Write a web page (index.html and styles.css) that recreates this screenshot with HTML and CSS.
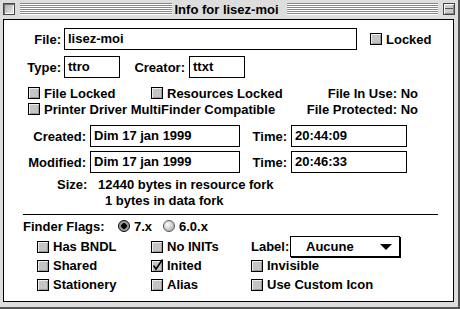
FILE: index.html
```html
<!DOCTYPE html>
<html lang="fr">
<head>
    <meta charset="UTF-8">
    <title>Info for lisez-moi</title>
    <link rel="stylesheet" href="styles.css">
</head>
<body>

<div class="window">
    <div class="titlebar">
        <span class="closebox"></span>
        <span class="stripes"></span>
        <span class="title">Info for lisez-moi</span>
        <span class="stripes"></span>
        <span class="shadebox"></span>
    </div>

    <div class="content">
        <!-- nom et verrou -->
        <div class="row row-file">
            <span class="lbl lbl-a">File:</span>
            <span class="field field-name">lisez-moi</span>
            <span class="check check-locked"><span class="box"></span>Locked</span>
        </div>

        <div class="row row-type">
            <span class="lbl lbl-a">Type:</span>
            <span class="field field-code">ttro</span>
            <span class="lbl lbl-creator">Creator:</span>
            <span class="field field-code">ttxt</span>
        </div>

        <!-- attributs -->
        <div class="attrs">
            <div class="attr-row">
                <span class="check col-first"><span class="box"></span>File Locked</span>
                <span class="check"><span class="box"></span>Resources Locked</span>
                <span class="status">File In Use: No</span>
            </div>
            <div class="attr-row">
                <span class="check"><span class="box"></span>Printer Driver MultiFinder Compatible</span>
                <span class="status">File Protected: No</span>
            </div>
        </div>

        <!-- dates -->
        <div class="row row-created">
            <span class="lbl lbl-b">Created:</span>
            <span class="field field-date">Dim 17 jan 1999</span>
            <span class="lbl lbl-time">Time:</span>
            <span class="field field-time">20:44:09</span>
        </div>
        <div class="row row-modified">
            <span class="lbl lbl-b">Modified:</span>
            <span class="field field-date">Dim 17 jan 1999</span>
            <span class="lbl lbl-time">Time:</span>
            <span class="field field-time">20:46:33</span>
        </div>

        <div class="size">
            <div class="size-line"><span class="size-lbl">Size:</span>12440 bytes in resource fork</div>
            <div class="size-line size-data">1 bytes in data fork</div>
        </div>

        <div class="sep"></div>

        <!-- finder flags -->
        <div class="flags-head">
            <span class="flags-lbl">Finder Flags:</span>
            <span class="radio-opt"><span class="radio on"></span>7.x</span>
            <span class="radio-opt"><span class="radio"></span>6.0.x</span>
        </div>

        <div class="flags">
            <span class="check"><span class="box"></span>Has BNDL</span>
            <span class="check"><span class="box"></span>No INITs</span>
            <span class="label-cell">
                <span class="label-lbl">Label:</span>
                <span class="popup">Aucune<span class="arrow"></span></span>
            </span>
            <span class="check"><span class="box"></span>Shared</span>
            <span class="check"><span class="box checked"><svg width="13" height="13" viewBox="0 0 13 13"><path d="M2.5 6.5 L5 10 L11.5 0.5" fill="none" stroke="#000" stroke-width="1.6"/></svg></span>Inited</span>
            <span class="check"><span class="box"></span>Invisible</span>
            <span class="check"><span class="box"></span>Stationery</span>
            <span class="check"><span class="box"></span>Alias</span>
            <span class="check"><span class="box"></span>Use Custom Icon</span>
        </div>
    </div>
</div>

</body>
</html>
```

FILE: styles.css
```css
/* fenetre style Mac OS 8 (Platinum) */
body {
    margin: 0;
    background: #fff;
    font-family: "Liberation Sans", Arial, sans-serif;
    font-weight: bold;
    font-size: 13px;
    color: #000;
}

.window {
    width: 460px;
    height: 309px;
    box-sizing: border-box;
    background: #dddddd;
    padding: 0 4px 5px 3px;
    border-right: 2px solid #555;
    border-bottom: 2px solid #555;
    display: flex;
    flex-direction: column;
}

/* --- barre de titre --- */
.titlebar {
    height: 19px;
    display: flex;
    align-items: flex-start;
    flex-shrink: 0;
}

.closebox,
.shadebox {
    width: 12px;
    height: 12px;
    margin-top: 3px;
    box-sizing: border-box;
    border: 1px solid #444;
    background: linear-gradient(135deg, #aaa 0%, #eee 100%);
    box-shadow: inset 1px 1px 0 #777, inset -1px -1px 0 #fff;
    position: relative;
}

.shadebox {
    margin-left: 5px;
    margin-right: -1px;
    background: #ccc;
    box-shadow: inset 1px 1px 0 #fff, inset -1px -1px 0 #888;
}

.shadebox::after {
    content: '';
    position: absolute;
    left: 1px;
    right: 1px;
    top: 4px;
    height: 1px;
    background: #555;
}

.stripes {
    flex: 1;
    height: 12px;
    margin-top: 3px;
    margin-left: 5px;
    background: repeating-linear-gradient(to bottom, #888 0 1px, #fff 1px 2px);
}

.title {
    line-height: 19px;
    padding: 0 3px;
}

/* --- contenu --- */
.content {
    flex: 1;
    background: #fff;
    border: 1px solid #000;
}

.row {
    display: flex;
    align-items: center;
    height: 22px;
}

.row-file {
    margin-top: 8px;
}

.row-type {
    margin-top: 6px;
}

.lbl {
    display: inline-block;
    text-align: right;
    margin-right: 3px;
}

.lbl-a {
    width: 57px;
}

.lbl-creator {
    width: 56px;
    margin-left: 9px;
    margin-right: 4px;
}

.field {
    box-sizing: border-box;
    height: 22px;
    border: 1px solid #000;
    padding: 0 3px;
    line-height: 20px;
    white-space: nowrap;
}

.field-name {
    width: 293px;
}

.field-code {
    width: 56px;
}

.check {
    display: inline-flex;
    align-items: center;
    white-space: nowrap;
}

.check-locked {
    margin-left: 13px;
}

.box {
    width: 12px;
    height: 12px;
    box-sizing: border-box;
    border: 1px solid #000;
    background: #c4c4c4;
    box-shadow: inset 1px 1px 0 #eee, inset -1px -1px 0 #999;
    margin-right: 4px;
    flex-shrink: 0;
    position: relative;
}

.box svg {
    position: absolute;
    left: -1px;
    top: -2px;
}

/* attributs */
.attrs {
    margin-top: 7px;
}

.attr-row {
    display: flex;
    align-items: center;
    height: 16px;
    padding-left: 24px;
    padding-right: 35px;
}

.col-first {
    width: 123px;
}

.status {
    margin-left: auto;
}

/* dates */
.row-created {
    margin-top: 8px;
}

.row-modified {
    margin-top: 4px;
}

.lbl-b {
    width: 82px;
    margin-right: 4px;
}

.field-date {
    width: 150px;
}

.lbl-time {
    width: 43px;
    margin-left: 4px;
    margin-right: 4px;
}

.field-time {
    width: 116px;
}

/* taille */
.size {
    margin-top: 4px;
}

.size-line {
    height: 16px;
    line-height: 16px;
    padding-left: 53px;
}

.size-lbl {
    display: inline-block;
    width: 41px;
}

.size-data {
    padding-left: 101px;
}

.sep {
    margin: 5px 0 0 19px;
    width: 415px;
    height: 1px;
    background: #000;
}

/* finder flags */
.flags-head {
    display: flex;
    align-items: center;
    height: 16px;
    margin-top: 3px;
    padding-left: 19px;
}

.flags-lbl {
    width: 95px;
}

.radio-opt {
    display: inline-flex;
    align-items: center;
    width: 45px;
}

.radio {
    width: 12px;
    height: 12px;
    box-sizing: border-box;
    border-radius: 50%;
    border: 1px solid #555;
    background: radial-gradient(circle at 35% 35%, #fff 0%, #ddd 35%, #999 100%);
    margin-right: 4px;
}

.radio.on {
    border-color: #000;
    background: radial-gradient(circle, #000 0 2.5px, #888 3px, #ccc 100%);
}

.flags {
    display: grid;
    grid-template-columns: 114px 100px auto;
    grid-auto-rows: 19px;
    align-items: center;
    margin-top: 3px;
    padding-left: 33px;
}

.label-cell {
    display: flex;
    align-items: center;
}

.label-lbl {
    width: 39px;
}

.popup {
    box-sizing: border-box;
    width: 110px;
    height: 21px;
    border: 1px solid #000;
    box-shadow: 1px 1px 0 #000;
    background: #fff;
    display: flex;
    align-items: center;
    padding-left: 15px;
    position: relative;
}

.arrow {
    position: absolute;
    right: 7px;
    top: 7px;
    width: 0;
    height: 0;
    border-left: 6px solid transparent;
    border-right: 6px solid transparent;
    border-top: 6px solid #000;
}
```
